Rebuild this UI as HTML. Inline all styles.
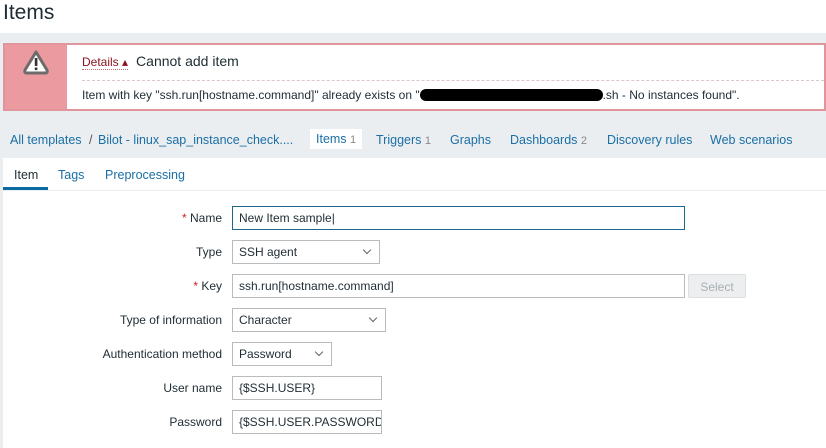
<!DOCTYPE html>
<html><head><style>
*{box-sizing:border-box;margin:0;padding:0}
body{width:826px;height:444px;overflow:hidden;background:#ebeef0;font-family:"Liberation Sans",Arial,sans-serif;font-size:12px;color:#1f2c33;position:relative}
.top{position:absolute;left:0;top:0;width:826px;height:33px;background:#fff}
.top h1{position:absolute;left:3px;top:1px;font-size:21px;font-weight:normal;color:#1f2c33}
.msg{position:absolute;left:3px;top:43px;width:823px;height:68px;border:2px solid #e0949c;background:#fff}
.msg .ic{position:absolute;left:0;top:0;width:62px;height:64px;background:#eb9aa0}
.msg .t1{position:absolute;left:77px;top:8px;font-size:14px}
.msg .det{color:#8a1520;font-size:12px;border-bottom:1px dotted #c07070;margin-right:8px}
.msg .dash{position:absolute;left:77px;top:35px;right:0;border-top:1px dashed #d8c8c8}
.msg .t2{position:absolute;left:77px;top:43px}
.nav{position:absolute;top:133px;left:10px;color:#1a6fa6;font-size:12.5px}
.nav span{position:absolute;white-space:nowrap;top:0}
.nav .c{color:#888;font-size:11px}
.cur{background:#fff;padding:3px 6px;top:-4px!important;color:#1a6fa6}
.panel{position:absolute;left:3px;top:158px;width:823px;height:290px;background:#fff}
.tabs{position:absolute;left:0;top:0;width:823px;height:33px;border-bottom:1px solid #ebeef0}
.tabs span{position:absolute;top:10px;color:#1a6fa6;font-size:12.5px}
.ul{position:absolute;left:0;top:29px;width:45px;height:3px;background:#0a6aa1}
.lbl{position:absolute;right:604px;text-align:right;white-space:nowrap;font-size:12px}
.lbl b{color:#c22;font-weight:normal}
.in{position:absolute;left:232px;height:24px;border:1px solid #b8bcbf;padding:4px 6px;font-size:12px;white-space:nowrap;overflow:hidden;background:#fff}
.sel::after{content:"";position:absolute;right:9px;top:6px;width:5px;height:5px;border-right:1px solid #666;border-bottom:1px solid #666;transform:rotate(45deg)}
.btn{position:absolute;left:688px;top:274px;width:58px;height:24px;background:#eceeef;border:1px solid #dcdfe0;color:#a8b0b4;text-align:center;padding-top:5px;border-radius:2px}
</style></head><body>
<div class="top"><h1>Items</h1></div>
<div class="msg">
<div class="ic"><svg width="62" height="63"><path d="M31 7 L42 25 Q43 28 40 28 L22 28 Q19 28 20 25 Z" fill="#fff" stroke="#6d6b6b" stroke-width="3" stroke-linejoin="round"/><rect x="29.8" y="13" width="2.6" height="8" fill="#333"/><rect x="29.8" y="22.5" width="2.6" height="2.6" fill="#333"/></svg></div>
<div class="t1"><span class="det">Details ▴</span>Cannot add item</div>
<div class="dash"></div>
<div class="t2">Item with key "ssh.run[hostname.command]" already exists on "<span style="display:inline-block;width:183px;height:12px;background:#000;border-radius:6px;vertical-align:-2px"></span>.sh - No instances found".</div>
</div>
<div class="nav">
<span style="left:0">All templates</span>
<span style="left:79px;color:#555">/</span>
<span style="left:88px">Bilot - linux_sap_instance_check....</span>
<span class="cur" style="left:300px">Items <span class="c" style="position:static">1</span></span>
<span style="left:366px">Triggers <span class="c" style="position:static">1</span></span>
<span style="left:440px">Graphs</span>
<span style="left:500px">Dashboards <span class="c" style="position:static">2</span></span>
<span style="left:597px">Discovery rules</span>
<span style="left:700px">Web scenarios</span>
</div>
<div class="panel">
<div class="tabs"><span style="left:11px;color:#1f2c33">Item</span><span style="left:55px">Tags</span><span style="left:102px">Preprocessing</span><div class="ul"></div></div>
</div>
<div class="lbl" style="top:211px"><b>*</b> Name</div>
<div class="in" style="top:206px;width:453px;border-color:#1f6690">New Item sample|</div>
<div class="lbl" style="top:245px">Type</div>
<div class="in sel" style="top:240px;width:148px">SSH agent</div>
<div class="lbl" style="top:279px"><b>*</b> Key</div>
<div class="in" style="top:274px;width:453px">ssh.run[hostname.command]</div>
<div class="btn">Select</div>
<div class="lbl" style="top:313px">Type of information</div>
<div class="in sel" style="top:308px;width:154px">Character</div>
<div class="lbl" style="top:347px">Authentication method</div>
<div class="in sel" style="top:342px;width:100px">Password</div>
<div class="lbl" style="top:381px">User name</div>
<div class="in" style="top:376px;width:150px">{$SSH.USER}</div>
<div class="lbl" style="top:415px">Password</div>
<div class="in" style="top:410px;width:150px">{$SSH.USER.PASSWORD}</div>
</body></html>
